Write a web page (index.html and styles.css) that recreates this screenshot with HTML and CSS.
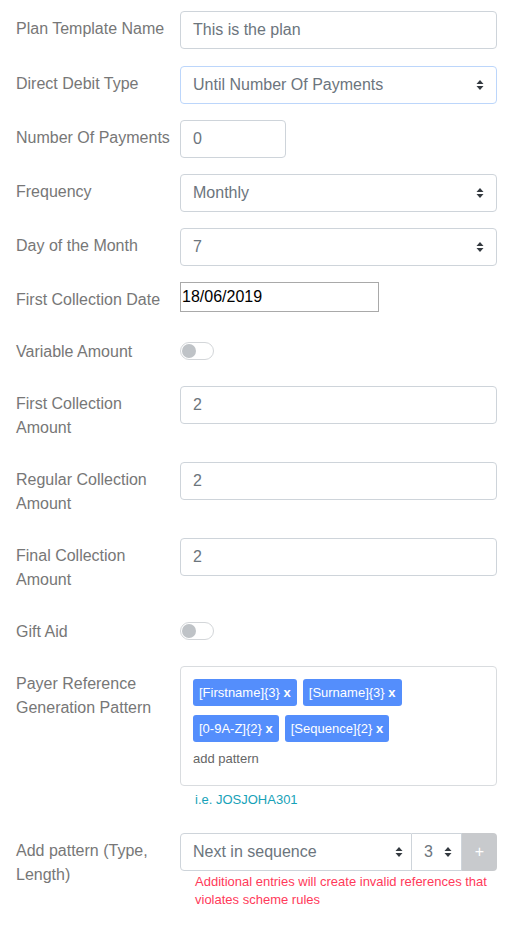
FILE: index.html
```html
<!DOCTYPE html>
<html>
<head>
<meta charset="utf-8">
<link rel="stylesheet" href="styles.css">
</head>
<body>
<form class="form">
  <div class="row row-first">
    <label class="lbl">Plan Template Name</label>
    <div class="ctl"><div class="input">This is the plan</div></div>
  </div>
  <div class="row">
    <label class="lbl">Direct Debit Type</label>
    <div class="ctl"><div class="input select focus"><span>Until Number Of Payments</span><svg class="arr" width="8" height="12" viewBox="0 0 8 12"><path d="M4 1 L7.5 5 H0.5 Z M4 11 L7.5 7 H0.5 Z" fill="#343a40"/></svg></div></div>
  </div>
  <div class="row">
    <label class="lbl">Number Of Payments</label>
    <div class="ctl"><div class="input short">0</div></div>
  </div>
  <div class="row">
    <label class="lbl">Frequency</label>
    <div class="ctl"><div class="input select"><span>Monthly</span><svg class="arr" width="8" height="12" viewBox="0 0 8 12"><path d="M4 1 L7.5 5 H0.5 Z M4 11 L7.5 7 H0.5 Z" fill="#343a40"/></svg></div></div>
  </div>
  <div class="row">
    <label class="lbl">Day of the Month</label>
    <div class="ctl"><div class="input select"><span>7</span><svg class="arr" width="8" height="12" viewBox="0 0 8 12"><path d="M4 1 L7.5 5 H0.5 Z M4 11 L7.5 7 H0.5 Z" fill="#343a40"/></svg></div></div>
  </div>
  <div class="row row-date">
    <label class="lbl">First Collection Date</label>
    <div class="ctl"><div class="date">18/06/2019</div></div>
  </div>
  <div class="row">
    <label class="lbl lbl-toggle">Variable Amount</label>
    <div class="ctl ctl-mid"><span class="toggle"><span class="knob"></span></span></div>
  </div>
  <div class="row">
    <label class="lbl">First Collection Amount</label>
    <div class="ctl"><div class="input">2</div></div>
  </div>
  <div class="row">
    <label class="lbl">Regular Collection Amount</label>
    <div class="ctl"><div class="input">2</div></div>
  </div>
  <div class="row row-final">
    <label class="lbl">Final Collection Amount</label>
    <div class="ctl"><div class="input">2</div></div>
  </div>
  <div class="row row-gift">
    <label class="lbl lbl-toggle">Gift Aid</label>
    <div class="ctl ctl-mid"><span class="toggle"><span class="knob"></span></span></div>
  </div>
  <div class="row row-payer">
    <label class="lbl">Payer Reference Generation Pattern</label>
    <div class="ctl">
      <div class="tagbox">
        <div class="tags">
          <span class="tag">[Firstname]{3} <b>x</b></span>
          <span class="tag">[Surname]{3} <b>x</b></span>
          <span class="tag">[0-9A-Z]{2} <b>x</b></span>
          <span class="tag">[Sequence]{2} <b>x</b></span>
        </div>
        <div class="addp">add pattern</div>
      </div>
      <div class="hint">i.e. JOSJOHA301</div>
    </div>
  </div>
  <div class="row">
    <label class="lbl">Add pattern (Type, Length)</label>
    <div class="ctl">
      <div class="group">
        <div class="gsel gsel-main"><span>Next in sequence</span><svg class="arr" width="8" height="12" viewBox="0 0 8 12"><path d="M4 1 L7.5 5 H0.5 Z M4 11 L7.5 7 H0.5 Z" fill="#343a40"/></svg></div>
        <div class="gsel gsel-len"><span>3</span><svg class="arr" width="8" height="12" viewBox="0 0 8 12"><path d="M4 1 L7.5 5 H0.5 Z M4 11 L7.5 7 H0.5 Z" fill="#343a40"/></svg></div>
        <div class="gbtn">+</div>
      </div>
      <div class="err">Additional entries will create invalid references that violates scheme rules</div>
    </div>
  </div>
</form>
</body>
</html>
```
FILE: styles.css
```css
* { box-sizing: border-box; }
html, body { margin: 0; padding: 0; background: #fff; }
body {
  font-family: "Liberation Sans", Arial, sans-serif;
  font-size: 16px;
  color: #6c757d;
}
.form { padding: 11px 18px 0 16px; }
.row {
  display: grid;
  grid-template-columns: 164px 1fr;
  grid-auto-rows: minmax(38px, auto);
  margin-bottom: 16px;
  align-items: start;
}
.row-first { margin-bottom: 17px; }
.row-date { margin-bottom: 12px; }
.row-final { margin-bottom: 14px; }
.lbl {
  color: #777;
  line-height: 24px;
  padding: 6px 8px 6px 0;
}
.lbl-toggle { padding-top: 8px; padding-bottom: 4px; }
.ctl { min-width: 0; }
.ctl-mid { align-self: center; display: flex; align-items: center; }
.input {
  height: 38px;
  border: 1px solid #ced4da;
  border-radius: 4px;
  padding: 0 12px;
  line-height: 36px;
  color: #6c757d;
  background: #fff;
}
.input.short { width: 106px; }
.select {
  display: flex;
  align-items: center;
  justify-content: space-between;
  padding-right: 12px;
}
.select.focus { border-color: #bcd6fb; }
.arr { display: block; flex: none; }
.date {
  width: 199px;
  height: 30px;
  border: 1px solid #a9a9a9;
  padding: 0 1px;
  line-height: 28px;
  color: #000;
  font-size: 16px;
}
.toggle {
  display: block;
  width: 34px;
  height: 18px;
  border: 1px solid #d3d6d9;
  border-radius: 9px;
  position: relative;
  background: #fff;
}
.knob {
  position: absolute;
  left: 1px;
  top: 1px;
  width: 14px;
  height: 14px;
  border-radius: 50%;
  background: #bfc3c7;
}
.tagbox {
  border: 1px solid #d9dcdf;
  border-radius: 4px;
  padding: 12px 12px 17px 12px;
  height: 120px;
}
.tags {
  display: flex;
  flex-wrap: wrap;
  gap: 9px 6px;
}
.tag {
  background: #548efc;
  color: #fff;
  font-size: 13px;
  line-height: 17px;
  padding: 5px 6px;
  border-radius: 3px;
}
.tag b { font-weight: bold; }
.addp {
  margin-top: 8px;
  font-size: 13px;
  line-height: 18px;
  color: #666;
}
.hint {
  margin: 5px 0 8px 15px;
  font-size: 13px;
  line-height: 18px;
  color: #17a2b8;
}
.group {
  display: flex;
  height: 38px;
}
.gsel {
  display: flex;
  align-items: center;
  justify-content: space-between;
  border: 1px solid #ced4da;
  height: 38px;
  color: #6c757d;
}
.gsel-main {
  width: 232px;
  padding: 0 8px 0 12px;
  border-radius: 4px 0 0 4px;
}
.gsel-len {
  width: 50px;
  padding: 0 9px 0 12px;
  border-left: 0;
}
.gbtn {
  width: 35px;
  background: #c8cacd;
  color: #fff;
  border-radius: 0 4px 4px 0;
  text-align: center;
  line-height: 38px;
  font-size: 16px;
}
.err {
  margin: 2px 0 0 15px;
  font-size: 13px;
  line-height: 18px;
  color: #ff3a5a;
}
```
